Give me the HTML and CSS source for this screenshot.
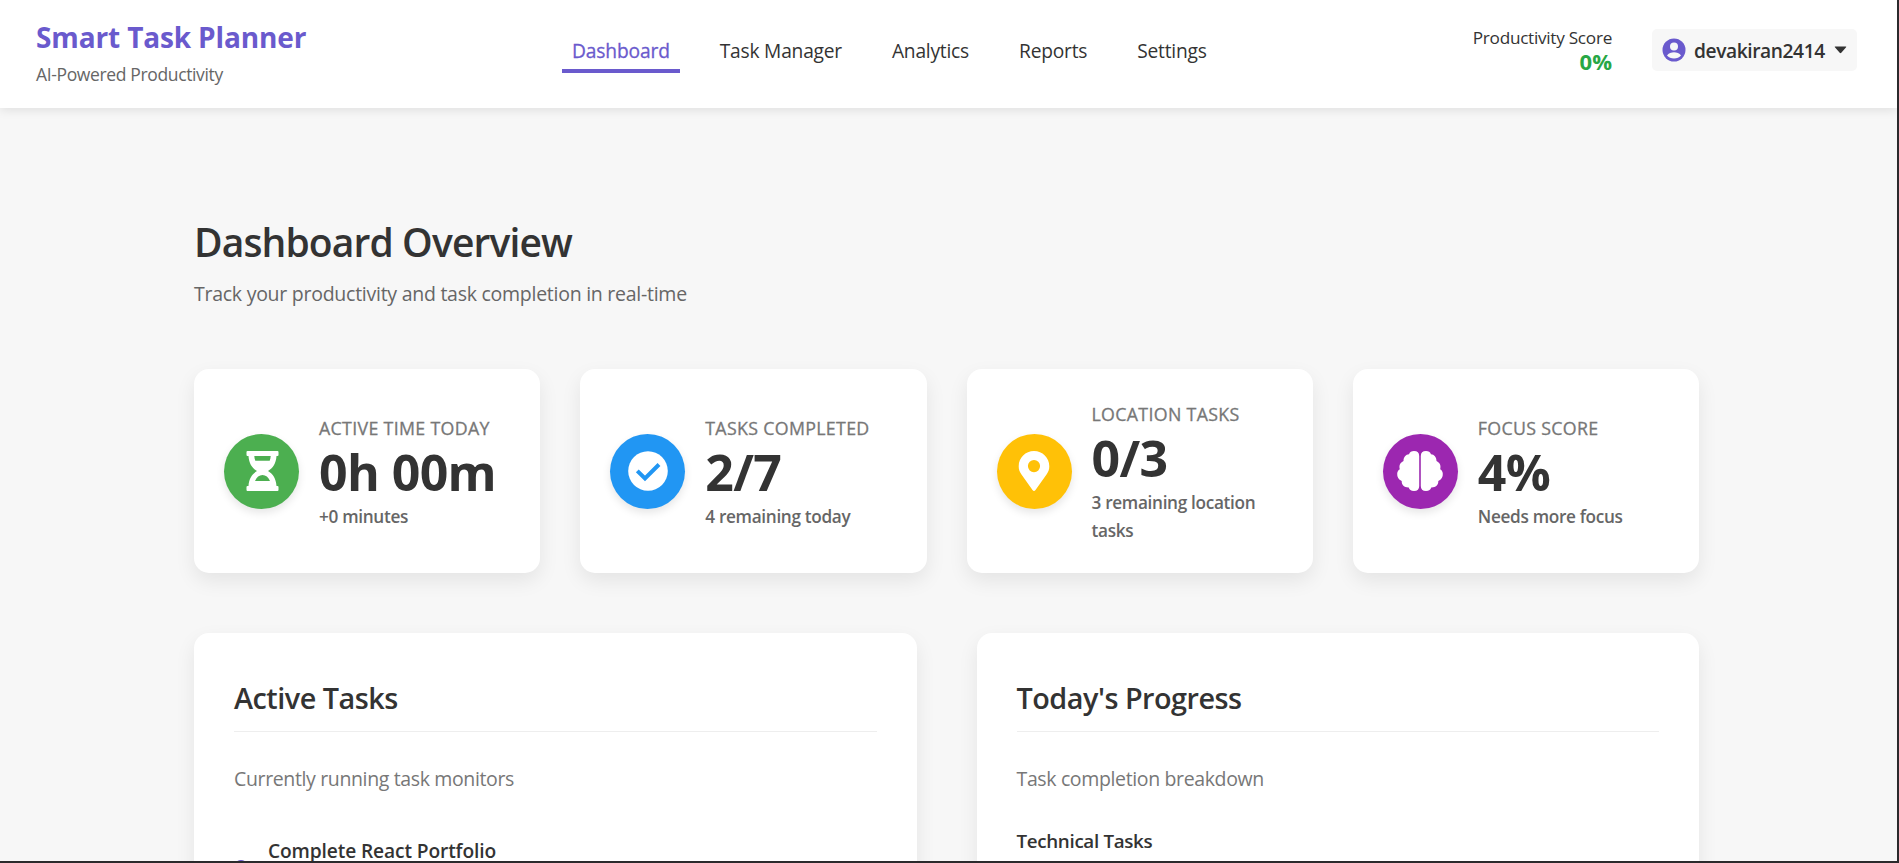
FILE: index.html
```html
<!DOCTYPE html>
<html lang="en">
<head>
<meta charset="utf-8">
<title>Smart Task Planner</title>
<link rel="stylesheet" href="styles.css">
</head>
<body>
<div class="window">
<header class="topbar">
  <div class="brand">
    <div class="brand-name">Smart Task Planner</div>
    <div class="brand-tagline">AI-Powered Productivity</div>
  </div>
  <nav class="nav">
    <a class="nav-link active">Dashboard</a>
    <a class="nav-link">Task Manager</a>
    <a class="nav-link">Analytics</a>
    <a class="nav-link">Reports</a>
    <a class="nav-link">Settings</a>
  </nav>
  <div class="score">
    <div class="score-label">Productivity Score</div>
    <div class="score-value">0%</div>
  </div>
  <div class="user">
    <svg class="user-icon" viewBox="0 0 24 24"><circle cx="12" cy="12" r="11.5" fill="#6a5acd"/><circle cx="12" cy="8.6" r="4" fill="#f7f7f7"/><path d="M5 17.6C6.400 14.900 9.500 14.200 12 14.200s5.600.700 7 3.400c-1.600 1.900-4.200 3-7 3s-5.400-1.100-7-3z" fill="#f7f7f7"/></svg>
    <span class="user-name">devakiran2414</span>
    <svg class="caret" viewBox="0 0 13 8"><path d="M1.300 0.500h10.400q1.100 0 .4.800L7.300 6.800q-.8.800-1.600 0L.9 1.300q-.7-.8.400-.8z" fill="#333"/></svg>
  </div>
</header>
<main class="page">
  <h1 class="title">Dashboard Overview</h1>
  <p class="subtitle">Track your productivity and task completion in real-time</p>
  <section class="stats">
    <article class="stat">
      <div class="stat-icon green"><svg viewBox="0 0 40 40"><path fill-rule="evenodd" fill="#fff" d="M5.500 0h30q1 0 1 1v3q0 1-1 1h-1C34 12.500 31 17 26 20c5 3 8 7.500 8.500 15h1q1 0 1 1v3q0 1-1 1h-30q-1 0-1-1v-3q0-1 1-1h1C7 27.500 10 23 15 20 10 17 7 12.500 6.500 5h-1q-1 0-1-1V1q0-1 1-1zM12.300 5c.1 1.700.4 3.300 1 4.700h14.400c.6-1.400.9-3 1-4.700zM13 30h15c-1.500-3.800-4.300-6-7.500-6S14.500 26.200 13 30z"/></svg></div>
      <div class="stat-text"><div class="stat-label">ACTIVE TIME TODAY</div><div class="stat-value">0h 00m</div><div class="stat-note">+0 minutes</div></div>
    </article>
    <article class="stat">
      <div class="stat-icon blue"><svg viewBox="0 0 40 40"><circle cx="20" cy="20" r="19.800" fill="#fff"/><path d="M9.300 19.800l7.700 7.700L31 13.500" fill="none" stroke="#2196f3" stroke-width="4"/></svg></div>
      <div class="stat-text"><div class="stat-label">TASKS COMPLETED</div><div class="stat-value">2/7</div><div class="stat-note">4 remaining today</div></div>
    </article>
    <article class="stat">
      <div class="stat-icon yellow"><svg viewBox="0 0 40 40"><path fill-rule="evenodd" fill="#fff" d="M20 0C11.500 0 4.700 6.700 4.700 15.200c0 3 .8 5.400 2.600 8L18.500 39q1.500 2 3 0L32.700 23.200c1.800-2.600 2.600-5 2.600-8C35.300 6.700 28.500 0 20 0zm0 9a6.100 6.100 0 1 1 0 12.200A6.100 6.100 0 0 1 20 9z"/></svg></div>
      <div class="stat-text"><div class="stat-label">LOCATION TASKS</div><div class="stat-value">0/3</div><div class="stat-note">3 remaining location tasks</div></div>
    </article>
    <article class="stat">
      <div class="stat-icon purple"><svg class="brain" viewBox="0 0 46 40" fill="#fff"><g id="half"><path d="M22.200 5v30q0 5-5.200 5c-3 0-4.700-1.500-5.200-3.600C7.500 36.600 4.500 34 4.700 30 1.500 28.500 0 26 .2 22.800c0-1.900.9-3.600 2.600-4.600C1.800 14.500 3.200 11.500 6.500 10 6.500 6 8.800 3.600 12 3.300 12.800 1 14.500 0 17 0q5.200 0 5.200 5z"/></g><use href="#half" transform="matrix(-1 0 0 1 46 0)"/></svg></div>
      <div class="stat-text"><div class="stat-label">FOCUS SCORE</div><div class="stat-value">4%</div><div class="stat-note">Needs more focus</div></div>
    </article>
  </section>
  <section class="panels">
    <article class="panel">
      <h2 class="panel-title">Active Tasks</h2>
      <p class="panel-desc">Currently running task monitors</p>
      <div class="task"><i class="task-dot"></i><span class="task-name">Complete React Portfolio</span></div>
    </article>
    <article class="panel">
      <h2 class="panel-title">Today's Progress</h2>
      <p class="panel-desc">Task completion breakdown</p>
      <div class="category">Technical Tasks</div>
    </article>
  </section>
</main>
</div>
</body>
</html>
```
FILE: styles.css
```css
* { box-sizing: border-box; }
body { margin: 0; width: 1899px; height: 863px; overflow: hidden; background: #2b2a2c; color: #333; font-family: "Open Sans", "Noto Sans", sans-serif; }
h1, h2, p { margin: 0; }
.window { width: 1897px; height: 861px; overflow: hidden; background: #f7f7f7; }
.topbar { position: relative; display: flex; align-items: center; height: 108px; padding: 0 40px 0 36px; background: #fff; box-shadow: 0 2px 10px rgba(0, 0, 0, .1); }
.brand { width: 526px; padding-bottom: 4px; }
.brand-name { font-size: 28px; line-height: 38px; font-weight: 700; letter-spacing: -.14px; color: #6a5acd; }
.brand-tagline { margin-top: 6px; font-size: 17.500px; line-height: 24px; letter-spacing: -.36px; color: #666; }
.nav { display: flex; gap: 30px; }
.nav-link { height: 38px; padding: 1px 10px 3px; border-bottom: 4px solid transparent; font-size: 19.200px; line-height: 30px; letter-spacing: -.22px; }
.nav-link.active { color: #6a5acd; border-color: #6a5acd; letter-spacing: -.14px; -webkit-text-stroke: .3px #6a5acd; }
.score { margin-left: auto; padding-bottom: 11px; text-align: right; }
.score-label { font-size: 17.200px; line-height: 24px; letter-spacing: -.28px; }
.score-value { font-size: 22px; line-height: 22px; font-weight: 700; color: #28a745; }
.user { display: flex; align-items: center; width: 205px; height: 42px; margin: 0 0 8px 40px; padding: 0 10px; border-radius: 5px; background: #f7f7f7; }
.user-icon { width: 24px; height: 24px; }
.user-name { margin-left: 8px; padding-top: 1px; font-size: 19.200px; line-height: 41px; font-weight: 600; letter-spacing: -.42px; }
.caret { width: 13px; height: 8px; margin-left: auto; }
.page { width: 1505px; margin: 0 0 0 194px; padding-top: 109px; }
.title { font-size: 39px; line-height: 50px; font-weight: 600; letter-spacing: -.88px; }
.subtitle { margin-top: 12px; font-size: 19.500px; line-height: 30px; letter-spacing: -.26px; color: #666; }
.stats { display: grid; grid-template-columns: repeat(4, 1fr); gap: 40px; margin-top: 60px; }
.stat { display: flex; align-items: center; gap: 20px; height: 204px; padding: 0 30px; border-radius: 15px; background: #fff; box-shadow: 0 8px 20px rgba(0, 0, 0, .08); }
.stat-icon { display: flex; flex: none; align-items: center; justify-content: center; width: 75px; height: 75px; border-radius: 50%; box-shadow: 0 4px 8px rgba(0, 0, 0, .1); }
.stat-icon svg { width: 40px; height: 40px; }
.stat-icon .brain { width: 46px; }
.stat-text { padding-top: 2px; }
.green { background: #4caf50; }
.blue { background: #2196f3; }
.yellow { background: #ffc107; }
.purple { background: #9c27b0; }
.stat-label { font-size: 17.800px; line-height: 28px; letter-spacing: .32px; color: #777; white-space: nowrap; -webkit-text-stroke: .3px #777; }
.stat-value { font-size: 50px; line-height: 61px; font-weight: 700; letter-spacing: -.6px; white-space: nowrap; }
.stat-note { font-size: 17.200px; line-height: 28px; font-weight: 600; letter-spacing: -.32px; color: #666; }
.panels { display: grid; grid-template-columns: 1fr 1fr; gap: 60px; margin-top: 60px; }
.panel { height: 400px; padding: 45px 40px 0; border-radius: 15px; background: #fff; box-shadow: 0 8px 20px rgba(0, 0, 0, .08); }
.panel-title { padding-bottom: 13px; border-bottom: 1px solid #eee; font-size: 28.800px; line-height: 40px; font-weight: 600; letter-spacing: -.5px; }
.panel-desc { margin-top: 32px; font-size: 19.500px; line-height: 30px; letter-spacing: -.36px; color: #777; }
.task { display: flex; gap: 20px; margin-top: 43px; font-size: 19.200px; line-height: 28px; font-weight: 600; letter-spacing: -.13px; }
.task-dot { width: 14px; height: 14px; margin-top: 23px; border-radius: 50%; background: #6a5acd; }
.category { margin-top: 33px; font-size: 18.800px; line-height: 28px; font-weight: 600; letter-spacing: -.33px; }
```
